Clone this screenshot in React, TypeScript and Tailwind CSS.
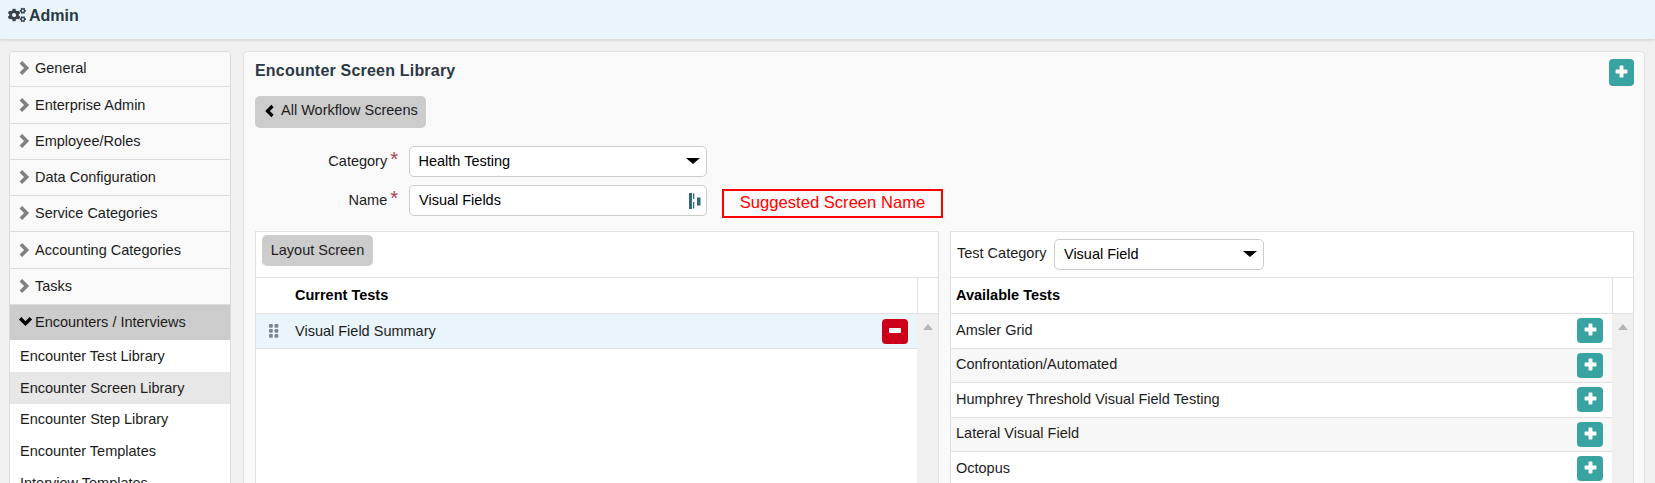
import React from "react";
import { FaCogs } from "react-icons/fa";

const sans = "font-['Liberation_Sans',Arial,sans-serif]";

function Chevron({ dir, className }: { dir: "right" | "left" | "down"; className: string }) {
  const pts = dir === "right" ? "2.500,2 7.500,7 2.500,12" : dir === "left" ? "9.500,2 4.500,7 9.500,12" : "2,4 7,9 12,4";
  return (
    <svg viewBox="0 0 14 14" className={className} fill="none" stroke="currentColor" strokeWidth="3.2">
      <polyline points={pts} />
    </svg>
  );
}

function Plus() {
  return (
    <svg viewBox="0 0 12 12" className="w-[13px] h-[13px] -mt-[2px]" fill="white">
      <path d="M4.2 1.2a.7.7 0 0 1 .7-.7h2.2a.7.7 0 0 1 .7.7v3h3a.7.7 0 0 1 .7.7v2.2a.7.7 0 0 1-.7.7h-3v3a.7.7 0 0 1-.7.7H4.9a.7.7 0 0 1-.7-.7v-3h-3a.7.7 0 0 1-.7-.7V4.900a.7.7 0 0 1 .7-.7h3z" />
    </svg>
  );
}

function AddBtn({ className = "w-[26px] h-[25px]" }: { className?: string }) {
  return (
    <button className={`rounded-[4px] bg-[#38a3a0] flex items-center justify-center shrink-0 ${className}`}>
      <Plus />
    </button>
  );
}

function Scrollbar() {
  return (
    <div className="w-[21px] shrink-0 bg-[#f0f0f0] flex justify-center pt-[10px]">
      <div className="w-0 h-0 border-x-[5px] border-x-transparent border-b-[6px] border-b-[#b5b5b5]" />
    </div>
  );
}

function SelectBox({ text, className }: { text: string; className: string }) {
  return (
    <div className={`bg-white border border-[#cccccc] rounded-[5px] h-[31px] pl-[8.5px] pr-[5px] flex items-center justify-between text-black ${className}`}>
      <span className="mt-[1px]">{text}</span>
      <span className="w-0 h-0 mr-[1px] -mt-[2px] border-x-[7px] border-x-transparent border-t-[6px] border-t-black" />
    </div>
  );
}

function Label({ text }: { text: string }) {
  return (
    <div className="text-right pt-[3px] leading-[20px] whitespace-nowrap">
      {text}
      <span className="ml-[3px] text-[#a94452] text-[20px] leading-none">*</span>
    </div>
  );
}

const menu = ["General", "Enterprise Admin", "Employee/Roles", "Data Configuration", "Service Categories", "Accounting Categories", "Tasks"];
const heights = ["h-[35px]", "h-[37px] pt-[1px]", "h-[36px]", "h-[36px]", "h-[36px]", "h-[37px] pt-[1px]", "h-[36px]"];
const subs = ["Encounter Test Library", "Encounter Screen Library", "Encounter Step Library", "Encounter Templates", "Interview Templates"];
const subPad = ["pt-[1px]", "pt-[1px]", "pt-0", "pt-0", "pt-0"];
const avail = ["Amsler Grid", "Confrontation/Automated", "Humphrey Threshold Visual Field Testing", "Lateral Visual Field", "Octopus"];

export default function App() {
  return (
    <div className={`${sans} w-[1655px] h-[483px] overflow-hidden bg-[#f0f0f0] text-[14.5px] text-[#1c1c1c]`}>
      <header className="h-[39px] bg-[#e9f5fb] shadow-[0_1px_3px_rgba(0,0,0,0.15)] flex items-start pl-[8px] pt-[6px] gap-[3px]">
        <FaCogs className="w-[18px] h-[16px] mt-[1px] text-[#39434d]" />
        <span className="font-bold text-[16px] leading-[20px] text-[#2b3846]">Admin</span>
      </header>
      <div className="flex items-start pt-[12px] pl-[9px] pr-[10px] gap-[12px]">
        <aside className="w-[222px] shrink-0 h-[440px] overflow-hidden bg-white border border-[#dcdcdc] rounded-t-[4px]">
          {menu.map((m, i) => (
            <div key={m} className={`${heights[i]} bg-[#f9f9f9] border-b border-[#dcdcdc] flex items-center pl-[8px] gap-[1px]`}>
              <Chevron dir="right" className="w-[16px] h-[16px] -mt-[2px] text-[#808080]" />
              <span>{m}</span>
            </div>
          ))}
          <div className="h-[35px] bg-[#cccccc] flex items-center pl-[8px] gap-[2px]">
            <Chevron dir="down" className="w-[15px] h-[15px] -mt-[2px] text-black" />
            <span>Encounters / Interviews</span>
          </div>
          {subs.map((s, i) => (
            <div key={s} className={`h-[32px] pl-[10px] ${subPad[i]} flex items-center ${i === 1 ? "bg-[#e7e7e7]" : "bg-white"}`}>
              {s}
            </div>
          ))}
        </aside>
        <main className="flex-1 h-[440px] overflow-hidden bg-[#f9f9f9] border border-[#e2e2e2] rounded-t-[4px] px-[11px]">
          <div className="flex justify-between pt-[7px]">
            <h1 className="font-bold text-[16px] leading-[20px] tracking-[0.2px] mt-[2px] text-[#2b3846]">Encounter Screen Library</h1>
            <AddBtn className="w-[25px] h-[27px] -mr-[1px]" />
          </div>
          <button className="mt-[10px] h-[32px] w-[171px] bg-[#cccccc] rounded-[5px] flex items-center pl-[8px] pb-[2px] gap-[4px]">
            <Chevron dir="left" className="w-[14px] h-[14px] text-black" />
            <span>All Workflow Screens</span>
          </button>
          <div className="mt-[18px] grid grid-cols-[143px_298px_auto] gap-x-[11px] gap-y-[8px] justify-start items-start">
            <Label text="Category" />
            <SelectBox text="Health Testing" className="" />
            <div />
            <Label text="Name" />
            <div className="bg-white border border-[#cccccc] rounded-[5px] h-[31px] pl-[9px] pr-[5px] flex items-center justify-between text-black">
              <span>Visual Fields</span>
              <svg viewBox="0 0 12 16" className="w-[12px] h-[16px]" fill="#2e6a7c">
                <rect x="0" y="0" width="3" height="16" />
                <rect x="4" y="0.500" width="1.300" height="5.500" />
                <rect x="4" y="9" width="1.300" height="6.500" />
                <rect x="8" y="4.500" width="3.500" height="8" />
              </svg>
            </div>
            <div className="ml-[4px] mt-[4px] w-[221px] h-[29px] border-2 border-[#ff0000] text-[#ff0000] text-[16.6px] flex items-center justify-center">
              Suggested Screen Name
            </div>
          </div>
          <div className="mt-[13px] grid grid-cols-[684px_684px] gap-x-[11px]">
            <section className="bg-white border border-[#e0e0e0] h-[261px] overflow-hidden">
              <div className="h-[46px] border-b border-[#e0e0e0] pl-[6px] pt-[3px]">
                <button className="w-[111px] h-[31px] bg-[#cccccc] rounded-[5px]">Layout Screen</button>
              </div>
              <div className="flex h-[36px] border-b border-[#e0e0e0]">
                <div className="flex-1 pl-[39px] flex items-center font-bold text-black">Current Tests</div>
                <div className="w-[21px] border-l border-[#e0e0e0]" />
              </div>
              <div className="flex h-full">
                <div className="flex-1">
                  <div className="h-[35px] bg-[#e9f5fb] border-b border-[#e0e0e0] flex items-center pl-[13px] pr-[9px]">
                    <svg viewBox="0 0 10 14" className="w-[10px] h-[14px] mr-[16px]" fill="#7d8686">
                      <rect x="0" y="0" width="3.800" height="3.800" rx="1" />
                      <rect x="5.500" y="0" width="3.800" height="3.800" rx="1" />
                      <rect x="0" y="5" width="3.800" height="3.800" rx="1" />
                      <rect x="5.500" y="5" width="3.800" height="3.800" rx="1" />
                      <rect x="0" y="10" width="3.800" height="3.800" rx="1" />
                      <rect x="5.500" y="10" width="3.800" height="3.800" rx="1" />
                    </svg>
                    <span className="flex-1 pt-[1px]">Visual Field Summary</span>
                    <button className="w-[26px] h-[25px] rounded-[4px] bg-[#cc0018] flex items-center justify-center">
                      <span className="w-[12px] h-[5px] rounded-[1px] bg-white -mt-[2px]" />
                    </button>
                  </div>
                </div>
                <Scrollbar />
              </div>
            </section>
            <section className="bg-white border border-[#e0e0e0] h-[261px] overflow-hidden">
              <div className="h-[46px] border-b border-[#e0e0e0] pl-[6px] flex items-center gap-[8px]">
                <span className="-mt-[2px]">Test Category</span>
                <SelectBox text="Visual Field" className="w-[210px]" />
              </div>
              <div className="flex h-[36px] border-b border-[#e0e0e0]">
                <div className="flex-1 pl-[5px] flex items-center font-bold text-black">Available Tests</div>
                <div className="w-[21px] border-l border-[#e0e0e0]" />
              </div>
              <div className="flex h-full">
                <div className="flex-1">
                  {avail.map((a, i) => (
                    <div key={a} className={`h-[34.5px] border-b border-[#e0e0e0] flex items-center pl-[5px] pr-[9px] justify-between ${i % 2 ? "bg-[#f7f7f7]" : "bg-white"}`}>
                      <span>{a}</span>
                      <AddBtn />
                    </div>
                  ))}
                </div>
                <Scrollbar />
              </div>
            </section>
          </div>
        </main>
      </div>
    </div>
  );
}
